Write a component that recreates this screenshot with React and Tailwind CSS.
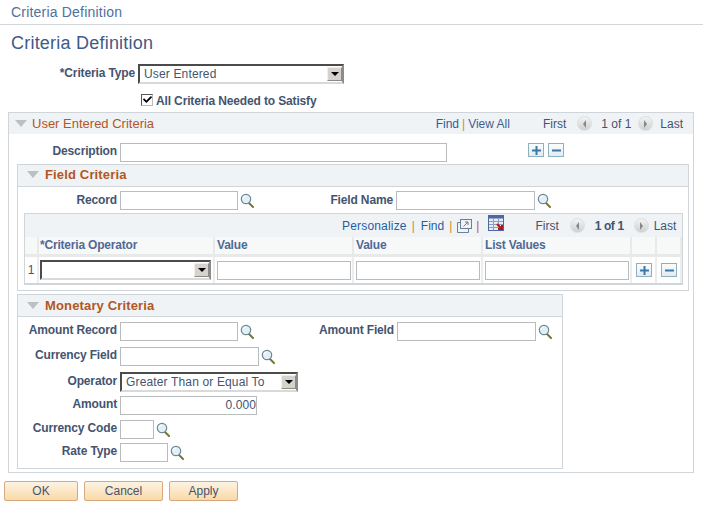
import { FaCheck } from 'react-icons/fa';

const Lens = () => (
  <svg width="14" height="15" viewBox="0 0 14 15" className="mt-[2px] shrink-0">
    <line x1="8.5" y1="9.5" x2="13" y2="14" stroke="#77763a" strokeWidth="2" strokeLinecap="round" />
    <circle cx="6" cy="6" r="4.7" fill="#e0f0f6" stroke="#6f8794" strokeWidth="1.2" />
    <path d="M3.2 5.5 A3 3 0 0 1 6 3" fill="none" stroke="#ffffff" strokeWidth="1.2" />
  </svg>
);

const Label = ({ w = 'w-[99px]', className = '', children }) => (
  <label className={`${w} shrink-0 self-start text-right font-bold leading-[16px] tracking-[-0.14px] text-[#44546f] ${className}`}>
    {children}
  </label>
);

const Input = ({ className = '', value = '' }) => (
  <div className={`h-[19px] shrink-0 border border-[#b9bcbc] bg-white text-right leading-[17px] tracking-[0.1px] text-[#44546f] ${className}`}>
    {value}
  </div>
);

const Select = ({ className = '', value = '' }) => (
  <div className={`flex shrink-0 items-stretch border-2 border-[#4b4b4b] border-r-[#8c8c8c] border-b-[#d9d9d9] bg-white ${className}`}>
    <span className="flex-1 pl-[4px] leading-[16px] tracking-[0.15px] text-[#44546f]">{value}</span>
    <span className="my-px flex w-[15px] items-center justify-center border border-[#8d8b84] border-l-[#f1efe9] border-t-[#f1efe9] bg-[#d6d3ce]">
      <span className="h-0 w-0 border-x-[4px] border-t-[4px] border-x-transparent border-t-black" />
    </span>
  </div>
);

const Toggle = ({ minus }) => (
  <div className="flex h-[14px] w-[16px] shrink-0 items-center justify-center border border-[#8fb0c0] bg-gradient-to-b from-[#fbfdfd] to-[#e3ebef]">
    <svg width="9" height="9" viewBox="0 0 9 9">
      <rect x="0" y="3.5" width="9" height="2" fill="#3a78ab" />
      {!minus && <rect x="3.5" y="0" width="2" height="9" fill="#3a78ab" />}
    </svg>
  </div>
);

const Arrow = ({ right }) => (
  <div className="flex h-[15px] w-[15px] items-center justify-center rounded-full border border-[#dcdede] bg-gradient-to-b from-[#f2f3f3] to-[#cfd1d1]">
    <span
      className={`h-0 w-0 border-y-[4px] border-y-transparent ${
        right ? 'border-l-[3px] border-l-[#85878a]' : 'border-r-[3px] border-r-[#85878a]'
      }`}
    />
  </div>
);

const Caret = () => (
  <span className="h-0 w-0 shrink-0 border-x-[6px] border-t-[7px] border-x-transparent border-t-[#bcc0c2]" />
);

const SectionHead = ({ title, className = '' }) => (
  <div className={`flex h-[22px] items-center gap-[6px] border-b border-[#d0d5d9] bg-[#eff3f5] pl-[9px] ${className}`}>
    <Caret />
    <span className="text-[13px] font-bold tracking-[0.15px] text-[#b2571e]">{title}</span>
  </div>
);

const Th = ({ children, className = '' }) => (
  <div className={`border-b-[3px] border-r-2 border-[#e8eaea] bg-[#f7f8f8] pl-[2px] font-bold leading-[17px] tracking-[-0.2px] text-[#4f6a96] ${className}`}>
    {children}
  </div>
);

const Td = ({ children, className = '' }) => (
  <div className={`flex items-center border-r-2 border-[#eceeee] ${className}`}>{children}</div>
);

export default function App() {
  return (
    <div className="h-[512px] w-[703px] overflow-hidden bg-white font-['Liberation_Sans',Arial,sans-serif] text-[12px] text-[#44546f]">
      <div className="h-[25px] border-b border-[#d0d5d9] pl-[11px] pt-[3px] text-[14px] leading-[18px] tracking-[0.2px] text-[#50709e]">
        Criteria Definition
      </div>

      <h1 className="ml-[11px] mt-[8px] h-[21px] text-[18px] leading-[21px] tracking-[0.22px] text-[#3f5a87]">Criteria Definition</h1>

      <div className="mt-[10px] flex gap-[3px] pl-[8px]">
        <Label w="w-[127px]" className="pt-px">*Criteria Type</Label>
        <Select className="h-[20px] w-[206px]" value="User Entered" />
      </div>

      <div className="ml-[141px] mt-[9px] flex h-[13px] items-center gap-[3px]">
        <div className="flex h-[12px] w-[12px] items-center justify-center border border-[#555] border-b-[#bbb] border-r-[#bbb] bg-white">
          <FaCheck className="text-[9px] text-black" />
        </div>
        <span className="pt-[2px] font-bold tracking-[-0.14px]">All Criteria Needed to Satisfy</span>
      </div>

      <section className="ml-[8px] mt-[6px] h-[361px] w-[686px] border border-[#d0d5d9]">
        <div className="flex h-[21px] items-center bg-[#eff3f5] pl-[6px] pr-[10px]">
          <Caret />
          <span className="ml-[5px] text-[13px] text-[#b2571e]">User Entered Criteria</span>
          <div className="ml-auto flex items-center">
            <a className="text-[#1f5ea8]">Find</a>
            <span className="mx-[3px] text-[#d48a2c]">|</span>
            <a className="text-[#44608e]">View All</a>
            <span className="ml-[33px]">First</span>
            <span className="ml-[11px]"><Arrow /></span>
            <span className="ml-[9px]">1 of 1</span>
            <span className="ml-[7px]"><Arrow right /></span>
            <span className="ml-[7px]">Last</span>
          </div>
        </div>

        <div className="mt-[9px] flex items-start">
          <div className="flex gap-[3px] pl-[2px]">
            <Label w="w-[106px]">Description</Label>
            <Input className="w-[327px]" />
          </div>
          <div className="ml-[81px] flex gap-[4px]">
            <Toggle />
            <Toggle minus />
          </div>
        </div>

        <div className="ml-[8px] mt-[2px] h-[127px] w-[672px] border border-[#d0d5d9]">
          <SectionHead title="Field Criteria" className="pb-[2px]" />
          <div className="mt-[4px] flex">
            <Label className="pt-px">Record</Label>
            <Input className="ml-[3px] w-[118px]" />
            <span className="ml-[2px]"><Lens /></span>
            <Label w="w-[139px]" className="pt-px">Field Name</Label>
            <Input className="ml-[3px] w-[139px]" />
            <span className="ml-[2px]"><Lens /></span>
          </div>

          <div className="ml-[6px] mt-[3px] w-[659px] border border-b-2 border-[#d0d5d9]">
            <div className="flex h-[23px] items-center bg-[#eff3f5] pl-[317px]">
              <a className="tracking-[0.18px] text-[#1f5ea8]">Personalize</a>
              <span className="ml-[5px] mr-[6px] text-[#d48a2c]">|</span>
              <a className="text-[#1f5ea8]">Find</a>
              <span className="ml-[5px] mr-[5px] text-[#d48a2c]">|</span>
              <svg width="15" height="14" viewBox="0 0 15 14" fill="none" stroke="#6d7f92">
                <rect x="3.5" y="0.5" width="11" height="9" />
                <path d="M3.5 3.5H0.5V13.5H11.5V9.5" />
                <path d="M6.5 7.5L11 3M8 3h3v3" />
              </svg>
              <span className="mx-[4px] text-[#c8582a]">|</span>
              <svg width="16" height="16" viewBox="0 0 16 16" className="ml-[5px] -mt-[5px]">
                <rect x="0.5" y="0.5" width="15" height="15" fill="#e8ecf4" stroke="#4d68a8" />
                <rect x="0.5" y="0.5" width="15" height="3" fill="#4d68a8" />
                <path d="M5.5 3v12M10.5 3v12M1 6.5h14M1 9.5h14M1 12.5h14" stroke="#8d9cc4" />
                <path d="M9 9l4 4m1-3v4h-4" fill="none" stroke="#b01818" strokeWidth="2" />
              </svg>
              <span className="ml-[31px]">First</span>
              <span className="ml-[11px]"><Arrow /></span>
              <span className="ml-[10px] font-bold tracking-[-0.4px]">1 of 1</span>
              <span className="ml-[10px]"><Arrow right /></span>
              <span className="ml-[5px]">Last</span>
            </div>

            <div className="grid grid-cols-[14px_176px_139px_129px_149px_25px_25px]">
              <Th />
              <Th className="pl-px">*Criteria Operator</Th>
              <Th>Value</Th>
              <Th>Value</Th>
              <Th>List Values</Th>
              <Th />
              <Th className="border-r-0" />

              <Td className="h-[26px] justify-center">1</Td>
              <Td className="pl-[1px]"><Select className="h-[20px] w-[171px]" /></Td>
              <Td className="pl-[2px]"><Input className="w-[134px]" /></Td>
              <Td className="pl-[2px]"><Input className="w-[124px]" /></Td>
              <Td className="pl-[2px]"><Input className="w-[144px]" /></Td>
              <Td className="pl-[4px]"><Toggle /></Td>
              <Td className="border-r-0 pl-[4px]"><Toggle minus /></Td>
            </div>
          </div>
        </div>

        <div className="ml-[8px] mt-[3px] h-[175px] w-[546px] border border-[#d0d5d9]">
          <SectionHead title="Monetary Criteria" />
          <div className="mt-[5px] flex">
            <Label>Amount Record</Label>
            <Input className="ml-[3px] w-[118px]" />
            <span className="ml-[2px]"><Lens /></span>
            <Label w="w-[140px]">Amount Field</Label>
            <Input className="ml-[3px] w-[139px]" />
            <span className="ml-[2px]"><Lens /></span>
          </div>
          <div className="mt-[6px] flex">
            <Label>Currency Field</Label>
            <Input className="ml-[3px] w-[139px]" />
            <span className="ml-[2px]"><Lens /></span>
          </div>
          <div className="mt-[6px] flex">
            <Label className="pt-px">Operator</Label>
            <Select className="ml-[3px] h-[20px] w-[178px]" value="Greater Than or Equal To" />
          </div>
          <div className="mt-[4px] flex">
            <Label>Amount</Label>
            <Input className="ml-[3px] w-[137px]" value="0.000" />
          </div>
          <div className="mt-[5px] flex">
            <Label>Currency Code</Label>
            <Input className="ml-[3px] w-[34px]" />
            <span className="ml-[2px]"><Lens /></span>
          </div>
          <div className="mt-[4px] flex">
            <Label>Rate Type</Label>
            <Input className="ml-[3px] w-[48px]" />
            <span className="ml-[2px]"><Lens /></span>
          </div>
        </div>
      </section>

      <div className="ml-[4px] mt-[8px] flex gap-[6px]">
        <button className="h-[20px] w-[74px] rounded-[2px] border border-[#d9a77c] bg-gradient-to-b from-[#fdf3e2] to-[#f9d9a8] text-[12px] text-[#44546f]">OK</button>
        <button className="h-[20px] w-[79px] rounded-[2px] border border-[#d9a77c] bg-gradient-to-b from-[#fdf3e2] to-[#f9d9a8] text-[12px] text-[#44546f]">Cancel</button>
        <button className="h-[20px] w-[69px] rounded-[2px] border border-[#d9a77c] bg-gradient-to-b from-[#fdf3e2] to-[#f9d9a8] text-[12px] text-[#44546f]">Apply</button>
      </div>
    </div>
  );
}
